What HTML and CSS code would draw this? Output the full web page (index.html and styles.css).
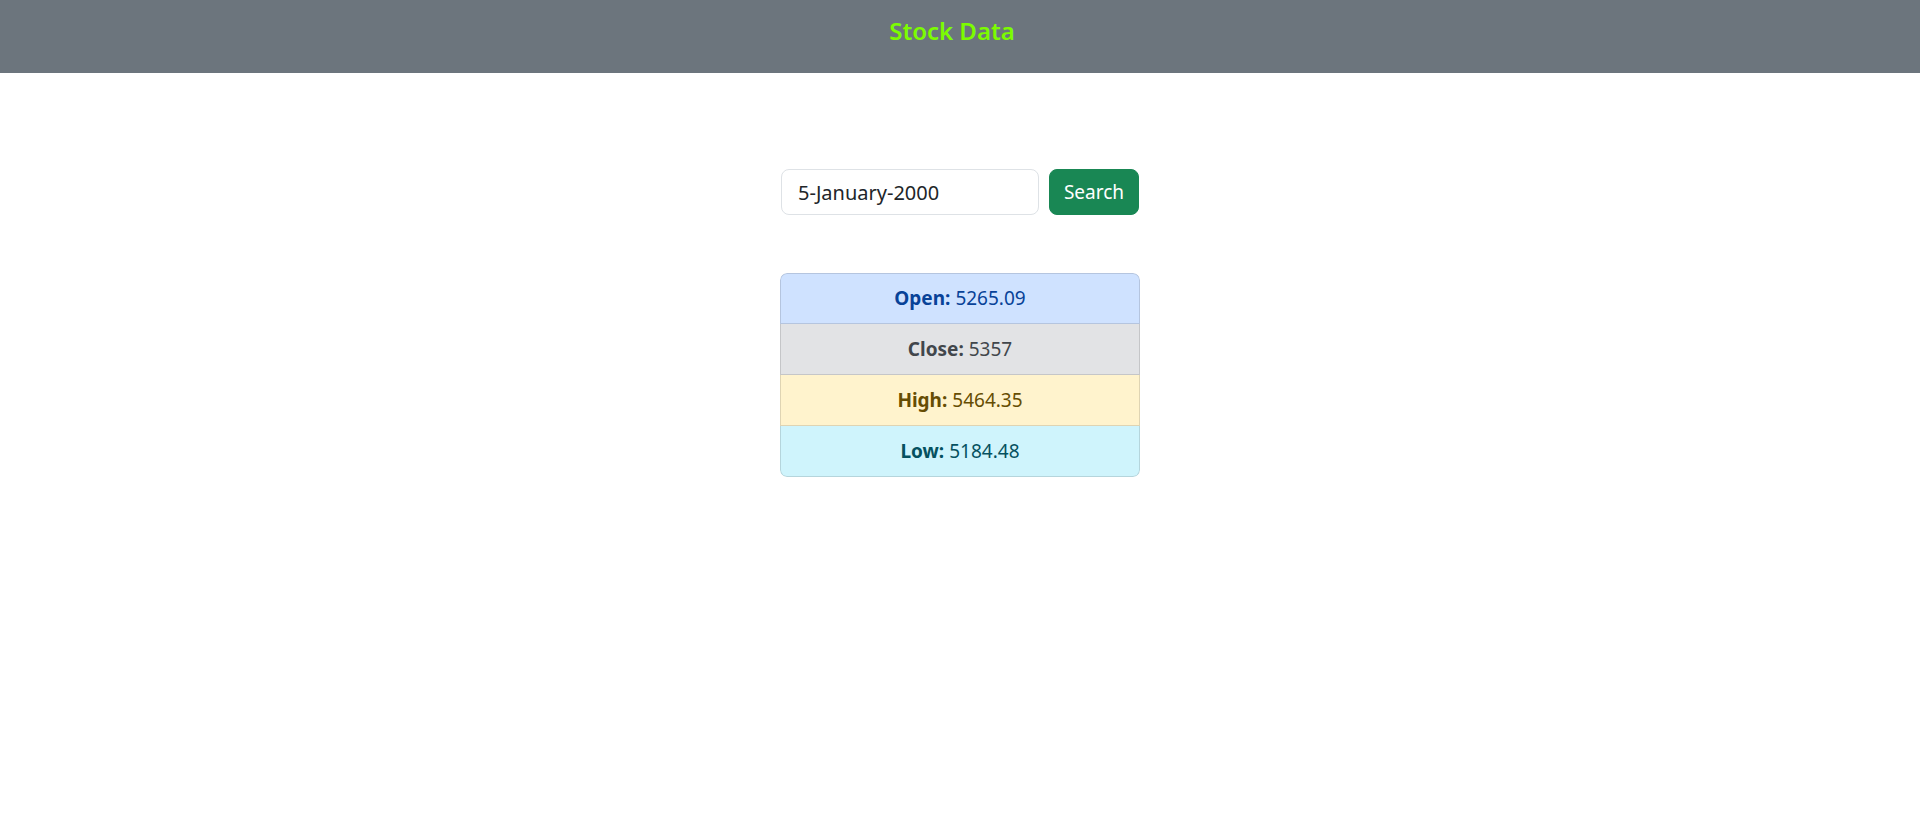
FILE: index.html
```html
<!DOCTYPE html>
<html lang="en">
<head>
<meta charset="utf-8">
<title>Stock Data</title>
<link rel="stylesheet" href="styles.css">
</head>
<body>
<header class="navbar">
  <h4 class="brand">Stock Data</h4>
</header>
<main class="content">
  <form class="search-form">
    <input class="search-input" type="text" value="5-January-2000">
    <button class="search-btn" type="button">Search</button>
  </form>
  <ul class="stock-list">
    <li class="stock-item item-primary"><b>Open:</b> 5265.09</li>
    <li class="stock-item item-secondary"><b>Close:</b> 5357</li>
    <li class="stock-item item-warning"><b>High:</b> 5464.35</li>
    <li class="stock-item item-info"><b>Low:</b> 5184.48</li>
  </ul>
</main>
</body>
</html>
```

FILE: styles.css
```css
* { box-sizing: border-box; }
html, body { margin: 0; padding: 0; }
body {
  font-family: "Noto Sans", "Open Sans", sans-serif;
  color: #212529;
  background: #fff;
}
.navbar {
  height: 73px;
  background: #6c757d;
  display: flex;
  justify-content: center;
  align-items: flex-start;
  padding-top: 17px;
}
.brand {
  margin: 0 16px 0 0;
  font-size: 24px;
  line-height: 1.2;
  font-weight: 600;
  color: #7cfc00;
}
.content {
  display: flex;
  flex-direction: column;
  align-items: center;
  padding-top: 96px;
}
.search-form {
  display: flex;
  gap: 10px;
  margin: 0;
}
.search-input {
  width: 258px;
  height: 46px;
  padding: 0 16px;
  font-family: inherit;
  font-size: 20px;
  line-height: 1.5;
  color: #212529;
  border: 1px solid #dee2e6;
  border-radius: 8px;
  outline: none;
}
.search-btn {
  width: 90px;
  height: 46px;
  padding: 0;
  font-family: inherit;
  font-size: 19px;
  line-height: 1.5;
  color: #fff;
  background: #198754;
  border: 1px solid #198754;
  border-radius: 8px;
}
.stock-list {
  list-style: none;
  margin: 58px 0 0;
  padding: 0;
  width: 360px;
  display: flex;
  flex-direction: column;
  border-radius: 7px;
  overflow: hidden;
}
.stock-item {
  height: 51px;
  display: flex;
  align-items: center;
  justify-content: center;
  gap: 5px;
  font-size: 19px;
  line-height: 1.5;
  border: 1px solid rgba(0, 0, 0, 0.125);
  border-top-width: 0;
}
.stock-item:first-child {
  border-top-width: 1px;
  border-radius: 7px 7px 0 0;
}
.stock-item:last-child { border-radius: 0 0 7px 7px; }
.stock-item b { font-weight: 700; }
.item-primary { background: #cfe2ff; color: #084298; }
.item-secondary { background: #e2e3e5; color: #41464b; }
.item-warning { background: #fff3cd; color: #664d03; }
.item-info { background: #cff4fc; color: #055160; }
```
